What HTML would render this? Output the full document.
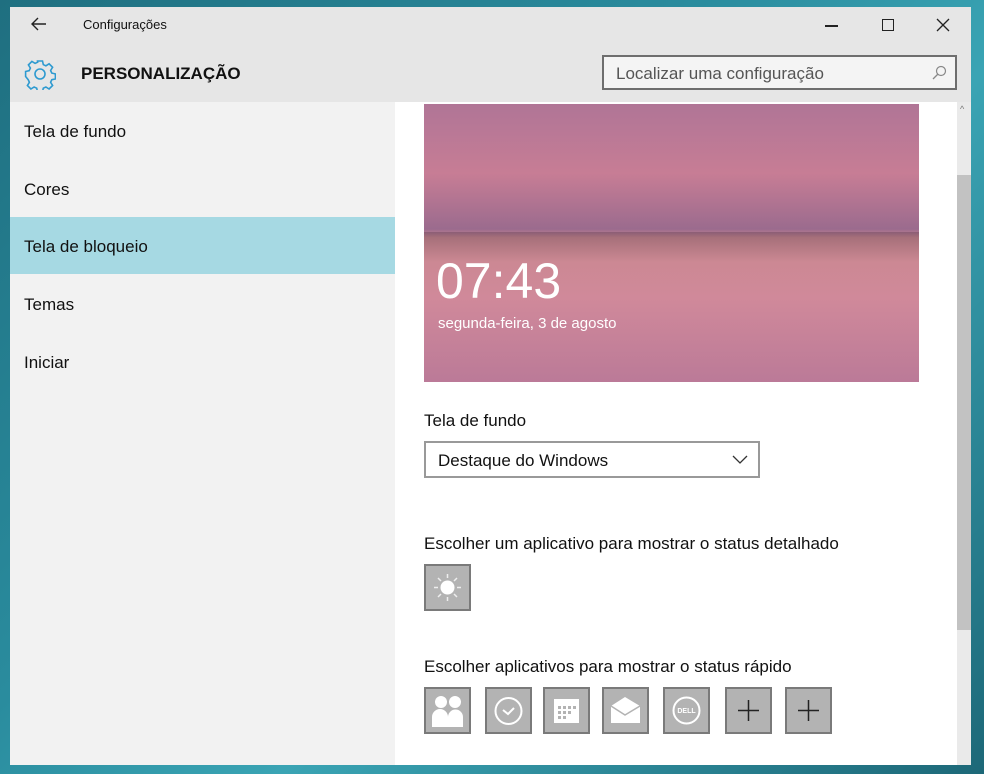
<!DOCTYPE html>
<html><head><meta charset="utf-8"><style>
*{margin:0;padding:0;box-sizing:border-box}
body{width:984px;height:774px;overflow:hidden;position:relative;font-family:"Liberation Sans",sans-serif;background:linear-gradient(135deg,#1f6f80 0%,#2a8c9e 40%,#3aa4b4 60%,#1d6878 100%)}
.win{position:absolute;left:10px;top:7px;width:961px;height:758px;background:#fff;overflow:hidden}
.hdr{position:absolute;left:0;top:0;width:961px;height:95px;background:#e6e6e6}
.side{position:absolute;left:0;top:95px;width:385px;height:663px;background:#f2f2f2}
.item{position:absolute;left:14px;font-size:17px;color:#111}
.sel{position:absolute;left:0;top:115px;width:385px;height:57px;background:#a6d9e3}
.t{position:absolute;color:#111}
.tile{position:absolute;width:47px;height:47px;background:#b3b3b3;border:2px solid #7a7a7a}
.sb{position:absolute;left:947px;top:95px;width:14px;height:663px;background:#eaeaea}
</style></head><body>
<div class="win">
 <div class="hdr">
  <svg style="position:absolute;left:20px;top:9px" width="18" height="16"><path d="M16 8H2M8 2L2 8l6 6" stroke="#222" stroke-width="1.4" fill="none"/></svg>
  <div class="t" style="left:73px;top:10px;font-size:13px">Configurações</div>
  <div style="position:absolute;left:815px;top:18px;width:13px;height:1.5px;background:#222"></div>
  <div style="position:absolute;left:872px;top:12px;width:12px;height:12px;border:1.5px solid #222"></div>
  <svg style="position:absolute;left:926px;top:11px" width="14" height="14"><path d="M1 1L13 13M13 1L1 13" stroke="#222" stroke-width="1.3"/></svg>
  <svg style="position:absolute;left:14px;top:51px" width="32" height="32" viewBox="0 0 32 32"><path d="M13.5 3h5l.8 3.6 2.6 1.2 3.2-2 3.5 3.5-2 3.2 1.2 2.6 3.6.8v5l-3.6.8-1.2 2.6 2 3.2-3.5 3.5-3.2-2-2.6 1.2-.8 3.6h-5l-.8-3.6-2.6-1.2-3.2 2-3.5-3.5 2-3.2-1.2-2.6L1.6 18.5v-5l3.6-.8 1.2-2.6-2-3.2 3.5-3.5 3.2 2 2.6-1.2z" fill="none" stroke="#2e9ad0" stroke-width="1.6"/><circle cx="16" cy="16" r="5" fill="none" stroke="#2e9ad0" stroke-width="1.6"/></svg>
  <div class="t" style="left:71px;top:57px;font-size:17px;font-weight:bold;color:#111">PERSONALIZAÇÃO</div>
  <div style="position:absolute;left:592px;top:48px;width:355px;height:35px;border:2px solid #6e6e6e;background:#f4f4f4">
   <div class="t" style="left:12px;top:7px;font-size:17px;color:#555">Localizar uma configuração</div>
   <svg style="position:absolute;right:8px;top:8px" width="16" height="16"><circle cx="10" cy="6" r="4.5" fill="none" stroke="#888" stroke-width="1.2"/><path d="M7 9L2 14" stroke="#888" stroke-width="1.3"/></svg>
  </div>
 </div>
 <div class="side">
  <div class="sel"></div>
  <div class="item" style="top:20px">Tela de fundo</div>
  <div class="item" style="top:78px">Cores</div>
  <div class="item" style="top:135px">Tela de bloqueio</div>
  <div class="item" style="top:193px">Temas</div>
  <div class="item" style="top:251px">Iniciar</div>
 </div>
 <div style="position:absolute;left:414px;top:97px;width:495px;height:278px;background:linear-gradient(180deg,#b07596 0%,#c77d95 25%,#9b6b8e 45%,#c9888f 48%,#d0899a 70%,#bb7a98 100%)">
  <div style="position:absolute;left:0;top:128px;width:495px;height:30px;background:linear-gradient(180deg,rgba(80,50,70,.35),rgba(80,50,70,0))"></div>
  <div class="t" style="left:12px;top:148px;font-size:50px;color:#fff;font-weight:300">07:43</div>
  <div class="t" style="left:14px;top:211px;font-size:15px;color:#fff">segunda-feira, 3 de agosto</div>
 </div>
 <div class="t" style="left:414px;top:404px;font-size:17px">Tela de fundo</div>
 <div style="position:absolute;left:414px;top:434px;width:336px;height:37px;border:2px solid #999;background:#fff">
  <div class="t" style="left:12px;top:8px;font-size:17px">Destaque do Windows</div>
  <svg style="position:absolute;right:10px;top:12px" width="16" height="10"><path d="M1 1l7 7 7-7" stroke="#333" stroke-width="1.3" fill="none"/></svg>
 </div>
 <div class="t" style="left:414px;top:527px;font-size:17px">Escolher um aplicativo para mostrar o status detalhado</div>
 <div class="tile" style="left:414px;top:557px"><svg width="43" height="43"><circle cx="21.5" cy="21.5" r="7" fill="#fff"/><path d="M21.5 8v4M21.5 31v4M8 21.5h4M31 21.5h4M12 12l3 3M28 28l3 3M31 12l-3 3M12 31l3-3" stroke="#eee" stroke-width="1.5"/></svg></div>
 <div class="t" style="left:414px;top:650px;font-size:17px">Escolher aplicativos para mostrar o status rápido</div>
 <div class="tile" style="left:414px;top:680px"><svg width="43" height="43"><circle cx="15" cy="13" r="6" fill="#fff"/><circle cx="29" cy="13" r="6" fill="#fff"/><path d="M6 38v-10a8 8 0 0 1 16 0v10zM22 38v-10a7 7 0 0 1 15 0v10z" fill="#fff"/></svg></div>
 <div class="tile" style="left:475px;top:680px"><svg width="43" height="43"><circle cx="21.5" cy="22" r="13" fill="none" stroke="#fff" stroke-width="2"/><path d="M16 21l5 4 6-6" stroke="#fff" stroke-width="2" fill="none"/></svg></div>
 <div class="tile" style="left:533px;top:680px"><svg width="43" height="43"><rect x="9" y="10" width="25" height="24" fill="#fff"/><g fill="#b3b3b3"><rect x="13" y="17" width="3" height="3"/><rect x="18" y="17" width="3" height="3"/><rect x="23" y="17" width="3" height="3"/><rect x="28" y="17" width="3" height="3"/><rect x="13" y="22" width="3" height="3"/><rect x="18" y="22" width="3" height="3"/><rect x="23" y="22" width="3" height="3"/><rect x="13" y="27" width="3" height="3"/><rect x="18" y="27" width="3" height="3"/></g></svg></div>
 <div class="tile" style="left:592px;top:680px"><svg width="43" height="43"><path d="M7 17l14-9 15 9v17H7z" fill="#fff"/><path d="M7 17l14 9 15-9" stroke="#b3b3b3" stroke-width="1.5" fill="none"/></svg></div>
 <div class="tile" style="left:653px;top:680px"><svg width="43" height="43"><circle cx="21.5" cy="21.5" r="13" fill="none" stroke="#fff" stroke-width="2"/><text x="21.5" y="24" font-size="7" fill="#fff" text-anchor="middle" font-family="Liberation Sans" font-weight="bold">DELL</text></svg></div>
 <div class="tile" style="left:715px;top:680px"><svg width="43" height="43"><path d="M21.5 11v21M11 21.5h21" stroke="#222" stroke-width="1.5"/></svg></div>
 <div class="tile" style="left:775px;top:680px"><svg width="43" height="43"><path d="M21.5 11v21M11 21.5h21" stroke="#222" stroke-width="1.5"/></svg></div>
 <div class="sb"><div style="position:absolute;left:0;top:73px;width:14px;height:455px;background:#c2c2c2"></div>
  <div style="position:absolute;left:3px;top:2px;font-size:9px;color:#777">^</div></div>
</div>
</body></html>
